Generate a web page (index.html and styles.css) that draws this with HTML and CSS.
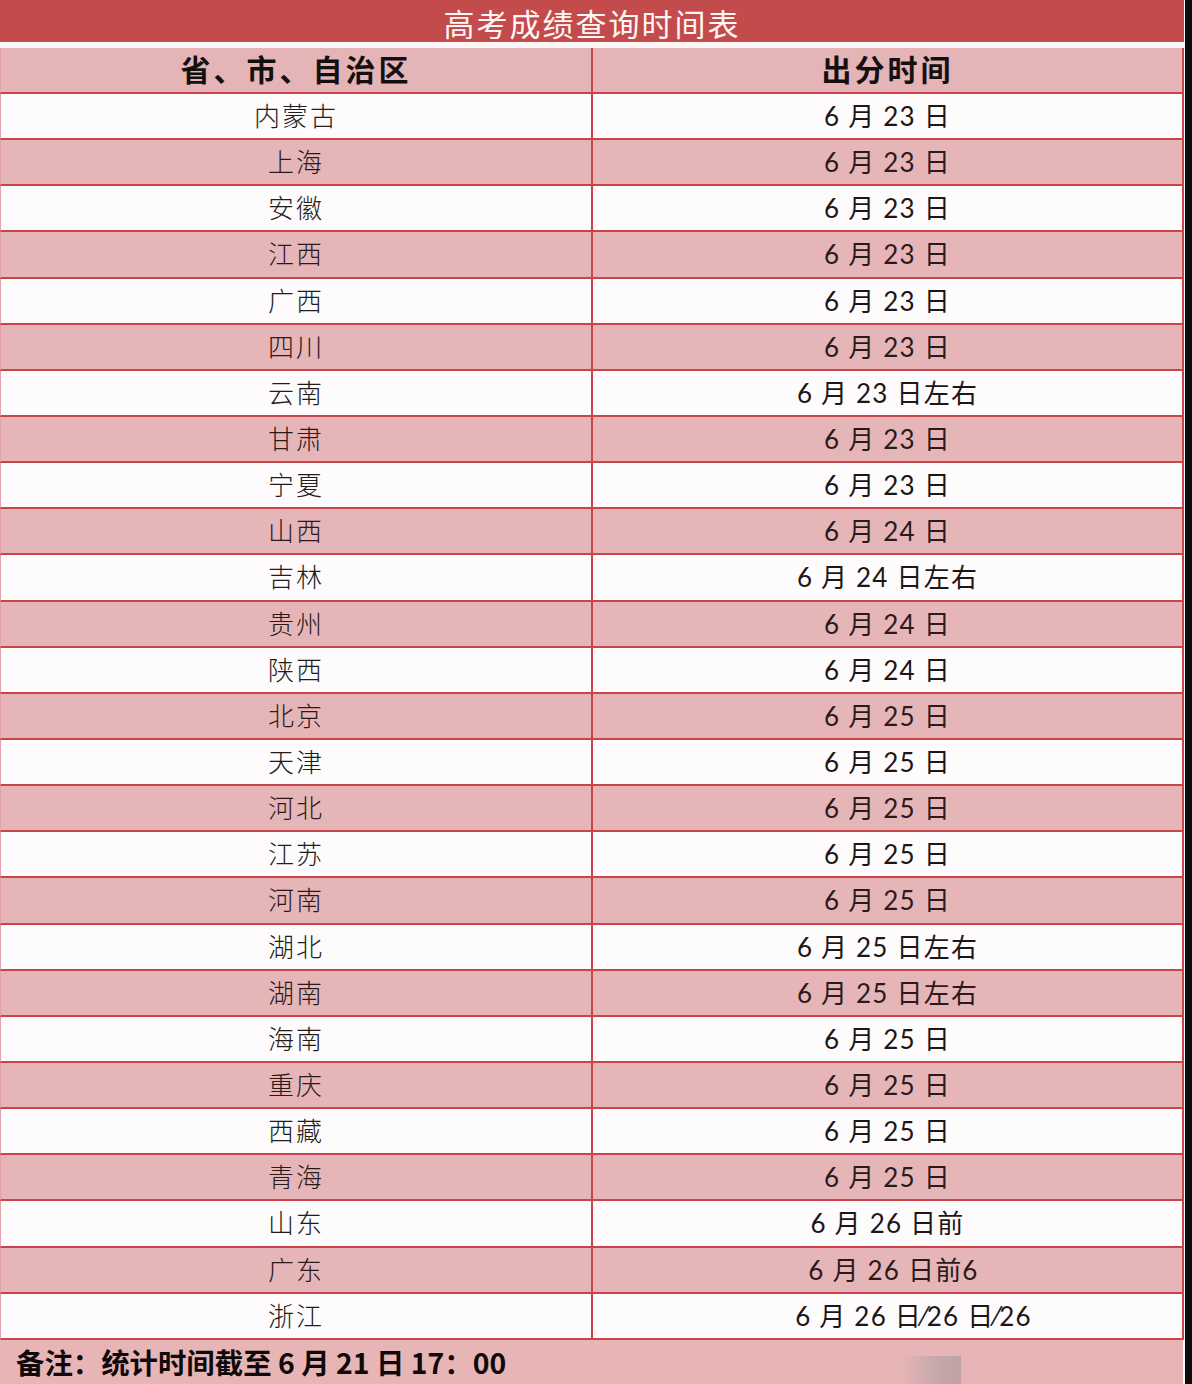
FILE: index.html
```html
<!DOCTYPE html>
<html lang="zh-CN">
<head>
<meta charset="utf-8">
<title>高考成绩查询时间表</title>
<link rel="stylesheet" href="styles.css">
</head>
<body>
<div class="page">
  <div class="sheet">
    <div class="title">高考成绩查询时间表</div>
    <div class="gap"></div>
    <div class="table">
      <div class="row head"><div class="cell">省、市、自治区</div><div class="cell">出分时间</div></div>
      <div class="row"><div class="cell prov">内蒙古</div><div class="cell date">6 月 23 日</div></div>
      <div class="row alt"><div class="cell prov">上海</div><div class="cell date">6 月 23 日</div></div>
      <div class="row"><div class="cell prov">安徽</div><div class="cell date">6 月 23 日</div></div>
      <div class="row alt"><div class="cell prov">江西</div><div class="cell date">6 月 23 日</div></div>
      <div class="row"><div class="cell prov">广西</div><div class="cell date">6 月 23 日</div></div>
      <div class="row alt"><div class="cell prov">四川</div><div class="cell date">6 月 23 日</div></div>
      <div class="row"><div class="cell prov">云南</div><div class="cell date">6 月 23 日左右</div></div>
      <div class="row alt"><div class="cell prov">甘肃</div><div class="cell date">6 月 23 日</div></div>
      <div class="row"><div class="cell prov">宁夏</div><div class="cell date">6 月 23 日</div></div>
      <div class="row alt"><div class="cell prov">山西</div><div class="cell date">6 月 24 日</div></div>
      <div class="row"><div class="cell prov">吉林</div><div class="cell date">6 月 24 日左右</div></div>
      <div class="row alt"><div class="cell prov">贵州</div><div class="cell date">6 月 24 日</div></div>
      <div class="row"><div class="cell prov">陕西</div><div class="cell date">6 月 24 日</div></div>
      <div class="row alt"><div class="cell prov">北京</div><div class="cell date">6 月 25 日</div></div>
      <div class="row"><div class="cell prov">天津</div><div class="cell date">6 月 25 日</div></div>
      <div class="row alt"><div class="cell prov">河北</div><div class="cell date">6 月 25 日</div></div>
      <div class="row"><div class="cell prov">江苏</div><div class="cell date">6 月 25 日</div></div>
      <div class="row alt"><div class="cell prov">河南</div><div class="cell date">6 月 25 日</div></div>
      <div class="row"><div class="cell prov">湖北</div><div class="cell date">6 月 25 日左右</div></div>
      <div class="row alt"><div class="cell prov">湖南</div><div class="cell date">6 月 25 日左右</div></div>
      <div class="row"><div class="cell prov">海南</div><div class="cell date">6 月 25 日</div></div>
      <div class="row alt"><div class="cell prov">重庆</div><div class="cell date">6 月 25 日</div></div>
      <div class="row"><div class="cell prov">西藏</div><div class="cell date">6 月 25 日</div></div>
      <div class="row alt"><div class="cell prov">青海</div><div class="cell date">6 月 25 日</div></div>
      <div class="row"><div class="cell prov">山东</div><div class="cell date">6 月 26 日前</div></div>
      <div class="row alt"><div class="cell prov">广东</div><div class="cell date shift-a">6 月 26 日前6</div></div>
      <div class="row"><div class="cell prov">浙江</div><div class="cell date shift-b">6 月 26 日⁄26 日⁄26</div></div>
    </div>
    <div class="note">
      <span class="note-text">备注：统计时间截至 6 月 21 日 17：00</span>
      <div class="smudge"></div>
    </div>
  </div>
  <div class="edge"></div>
</div>
</body>
</html>
```

FILE: styles.css
```css
html, body {
  margin: 0;
  padding: 0;
}

body {
  background: #ffffff;
  font-family: "Noto Sans CJK SC", "Noto Sans", sans-serif;
}

.page {
  display: flex;
  width: 1192px;
  height: 1384px;
  overflow: hidden;
}

.sheet {
  width: 1185px;
  background: #fdfafa;
  display: flex;
  flex-direction: column;
}

.edge {
  flex: 1;
  background: #0d0d0d;
}

.title {
  width: 1184px;
  height: 42px;
  box-sizing: border-box;
  padding-top: 3px;
  background: #c34b4c;
  color: #fff7f5;
  font-size: 31px;
  line-height: 39px;
  text-align: center;
  letter-spacing: 2px;
  font-weight: 400;
}

.gap {
  height: 6px;
  width: 1184px;
  background: #fcf6f6;
}

.table {
  width: 1184px;
  display: flex;
  flex-direction: column;
}

.row {
  display: flex;
  height: 46.15px;
  box-sizing: border-box;
  border-bottom: 2px solid #c9454b;
  border-right: 2px solid #c9454b;
  border-left: 1px solid #e2a4a8;
  background: #fdfbfb;
}

.row.alt {
  background: #e6b5b8;
}

.row.head {
  height: 46px;
  background: #e5b4b7;
}

.cell {
  display: flex;
  align-items: center;
  justify-content: center;
  white-space: nowrap;
  box-sizing: border-box;
}

.cell:first-child {
  width: 592px;
  border-right: 2px solid #c9454b;
}

.cell:last-child {
  flex: 1;
}

.head .cell {
  font-size: 30px;
  font-weight: 700;
  color: #141010;
  letter-spacing: 3px;
  padding-bottom: 4px;
}

.prov {
  font-size: 26px;
  font-weight: 300;
  color: #221c1c;
  letter-spacing: 2px;
  padding-bottom: 3px;
}

.date {
  font-family: "Lato", "Noto Sans CJK SC", sans-serif;
  font-size: 26px;
  font-weight: 400;
  color: #1c1616;
  letter-spacing: 1.2px;
  padding-bottom: 3px;
}

.alt .prov,
.alt .date {
  color: #2a1a1b;
}

.date.shift-a {
  padding-left: 12px;
}

.date.shift-b {
  padding-left: 52px;
}

.note {
  position: relative;
  flex: 1;
  width: 1183px;
  background: #e8b5b7;
  display: flex;
  align-items: center;
  padding-left: 16px;
  box-sizing: border-box;
}

.note-text {
  font-size: 28.4px;
  font-weight: 700;
  color: #0e0a0a;
  letter-spacing: 0;
}

.smudge {
  position: absolute;
  left: 903px;
  top: 16px;
  width: 58px;
  height: 30px;
  background: linear-gradient(to right, #e6b4b6, #c9aaac 50%, #bea2a5);
}
```
